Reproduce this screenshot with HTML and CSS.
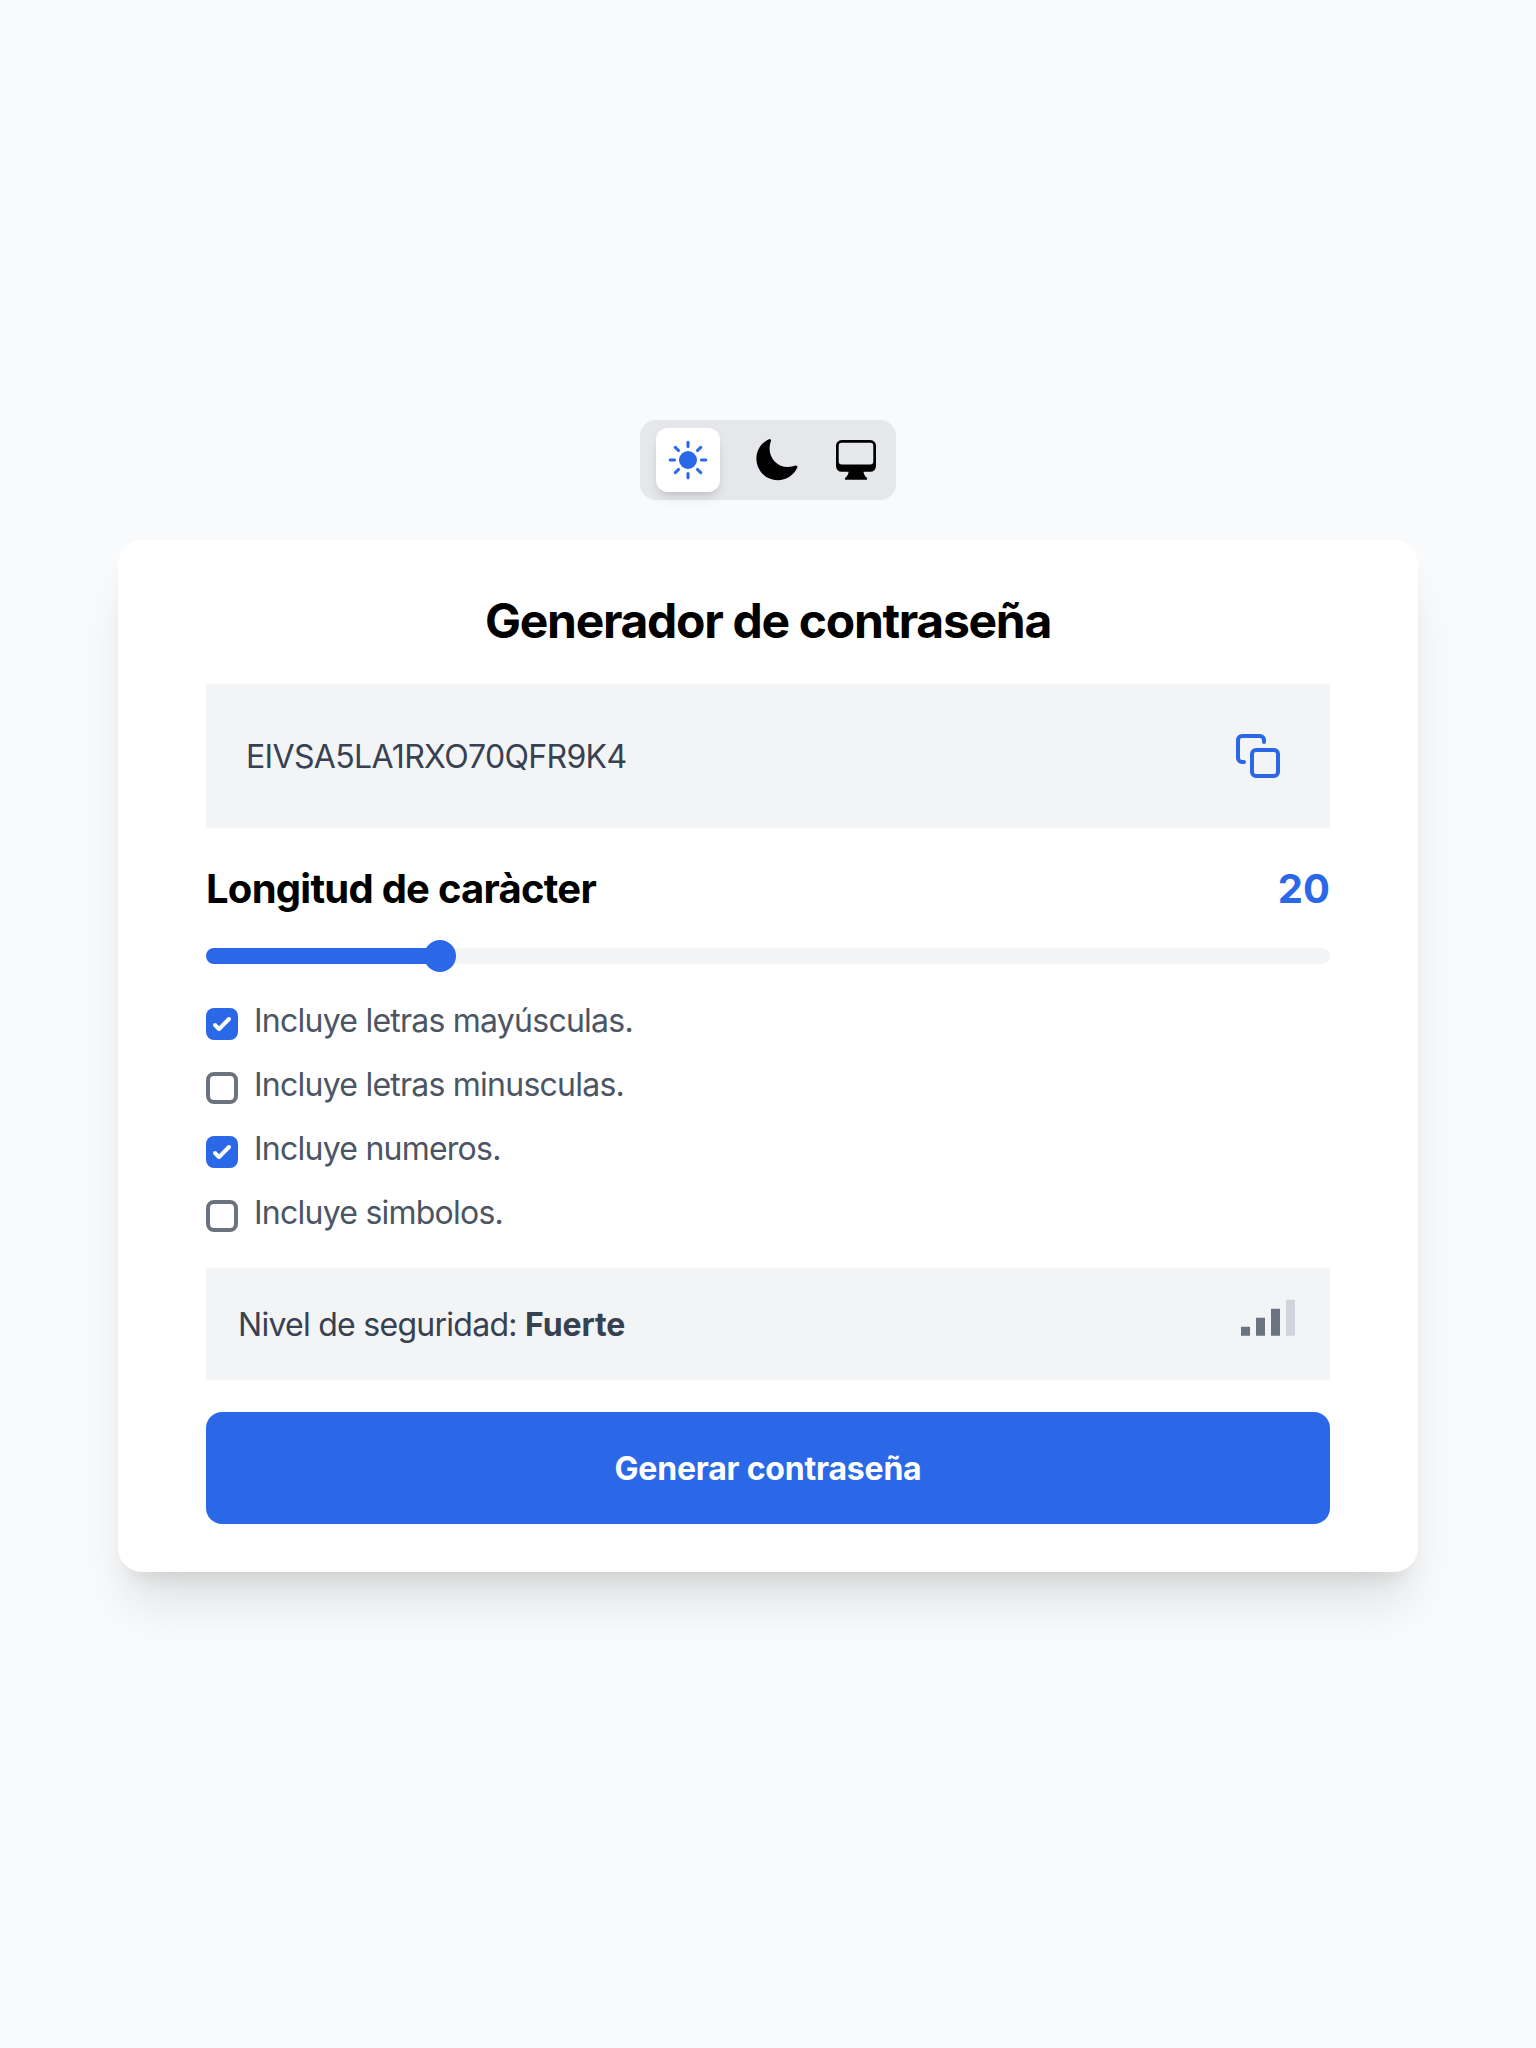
FILE: index.html
```html
<!DOCTYPE html>
<html lang="es">
<head>
<meta charset="utf-8">
<title>Generador de contraseña</title>
<link rel="stylesheet" href="styles.css">
</head>
<body>
<main class="page">
  <nav class="theme">
    <button class="theme-btn theme-active" aria-label="Claro">
      <svg class="icon" viewBox="0 0 48 48" fill="none" stroke="currentColor" stroke-width="3.100" stroke-linecap="round">
        <circle cx="24" cy="24" r="9" fill="currentColor" stroke="none"/>
        <path d="M24 6.200v4.300M24 37.500v4.300M6.200 24h4.300M37.500 24h4.300M11.300 11.300l3.200 3.200M33.500 33.500l3.200 3.200M11.300 36.700l3.200-3.200M33.500 14.500l3.200-3.200"/>
      </svg>
    </button>
    <button class="theme-btn" aria-label="Oscuro">
      <svg class="icon" viewBox="-16 -2 524 524" fill="currentColor"><path d="M264 480A232 232 0 0132 248c0-94 54-178.280 137.610-214.670a16 16 0 0121.060 21.060C181.070 76.430 176 104.660 176 136c0 110.280 89.720 200 200 200 31.340 0 59.570-5.070 81.610-14.670a16 16 0 0121.060 21.060C442.280 426 358 480 264 480z"/></svg>
    </button>
    <button class="theme-btn" aria-label="Sistema">
      <svg class="icon" viewBox="0 0 48 48" fill="currentColor"><path fill-rule="evenodd" d="M9.600 4h28.800a5.600 5.600 0 015.600 5.600v20.600a5.600 5.600 0 01-5.600 5.600h-6.900c.3 2.500 1.200 4.200 3 5.600 1.300 1 .8 2.400-.6 2.400H14.200c-1.400 0-1.900-1.400-.6-2.400 1.800-1.400 2.700-3.100 3-5.600H9.600A5.600 5.600 0 014 30.200V9.600A5.600 5.600 0 019.600 4zM9.700 6.700a3 3 0 00-3 3v15.800a3 3 0 003 3h28.600a3 3 0 003-3V9.700a3 3 0 00-3-3z"/></svg>
    </button>
  </nav>

  <section class="card">
    <h1 class="title">Generador de contraseña</h1>

    <div class="password">
      <span class="password-text">EIVSA5LA1RXO70QFR9K4</span>
      <svg class="icon copy" viewBox="0 0 24 24" fill="none" stroke="currentColor" stroke-width="2" stroke-linecap="round" stroke-linejoin="round"><rect x="9" y="9" width="13" height="13" rx="2"/><path d="M5 15H4a2 2 0 01-2-2V4a2 2 0 012-2h9a2 2 0 012 2v1"/></svg>
    </div>

    <div class="length">
      <h2 class="length-label">Longitud de caràcter</h2>
      <span class="length-value">20</span>
    </div>

    <div class="slider">
      <div class="slider-fill" style="width: 20.8%"><span class="slider-thumb"></span></div>
    </div>

    <div class="options">
      <label class="option"><span class="box box-on"><svg viewBox="0 0 16 16" fill="#fff"><path d="M12.207 4.793a1 1 0 010 1.414l-5 5a1 1 0 01-1.414 0l-2-2a1 1 0 011.414-1.414L6.500 9.086l4.293-4.293a1 1 0 011.414 0z"/></svg></span><span>Incluye letras mayúsculas.</span></label>
      <label class="option"><span class="box"></span><span>Incluye letras minusculas.</span></label>
      <label class="option"><span class="box box-on"><svg viewBox="0 0 16 16" fill="#fff"><path d="M12.207 4.793a1 1 0 010 1.414l-5 5a1 1 0 01-1.414 0l-2-2a1 1 0 011.414-1.414L6.500 9.086l4.293-4.293a1 1 0 011.414 0z"/></svg></span><span>Incluye numeros.</span></label>
      <label class="option"><span class="box"></span><span>Incluye simbolos.</span></label>
    </div>

    <div class="level">
      <p class="level-text">Nivel de seguridad: <strong class="level-value">Fuerte</strong></p>
      <svg class="bars" viewBox="0 0 60 60"><path fill="#6b7280" d="M3 32.700h9v9H3zM18 23.700h9v18h-9zM33 14.700h9v27h-9z"/><path fill="#d1d5db" d="M48 5.700h9v36h-9z"/></svg>
    </div>

    <button class="generate">Generar contraseña</button>
  </section>
</main>
</body>
</html>
```
FILE: styles.css
```css
* {
  box-sizing: border-box;
  margin: 0;
}

body {
  background: #f9fafb;
  color: #000;
  font-family: Inter, "Liberation Sans", sans-serif;
  font-size: 32px;
  line-height: 48px;
}

button {
  border: 0;
  padding: 0;
  background: none;
  color: inherit;
  font: inherit;
}

.page {
  display: flex;
  flex-direction: column;
  align-items: center;
  gap: 40px;
  min-height: 2048px;
  padding-top: 420px;
}

.theme {
  display: flex;
  align-items: center;
  gap: 32px;
  height: 80px;
  padding: 0 16px;
  border-radius: 16px;
  background: #e5e7eb;
}

.theme-btn {
  display: flex;
  align-items: center;
  justify-content: center;
}

.theme-active {
  width: 64px;
  height: 64px;
  border-radius: 12px;
  background: #fff;
  color: #2b68e8;
  box-shadow: 0 8px 12px -2px rgba(0, 0, 0, .1), 0 4px 8px -4px rgba(0, 0, 0, .1);
}

.icon {
  display: block;
  width: 48px;
  height: 48px;
}

.card {
  display: flex;
  flex-direction: column;
  gap: 32px;
  width: 1300px;
  padding: 48px 88px;
  border-radius: 24px;
  background: #fff;
  box-shadow: 0 40px 50px -10px rgba(0, 0, 0, .1), 0 16px 20px -12px rgba(0, 0, 0, .1);
}

.title {
  height: 64px;
  font-size: 48px;
  font-weight: 700;
  line-height: 66px;
  letter-spacing: -1.3px;
  text-align: center;
}

.password {
  display: flex;
  align-items: center;
  justify-content: space-between;
  height: 144px;
  padding: 0 48px 0 40px;
  background: #f3f4f6;
  color: #374151;
}

.password-text {
  padding-top: 2px;
  letter-spacing: -.66px;
}

.copy {
  color: #2b68e8;
}

.length {
  display: flex;
  justify-content: space-between;
  height: 56px;
  font-size: 40px;
  font-weight: 700;
  line-height: 58px;
}

.length-label {
  font-size: 40px;
  letter-spacing: -.75px;
}

.length-value {
  color: #2b68e8;
}

.slider {
  height: 16px;
  border-radius: 8px;
  background: #f3f4f6;
}

.slider-fill {
  position: relative;
  height: 16px;
  border-radius: 8px;
  background: #2b68e8;
}

.slider-thumb {
  position: absolute;
  top: -8px;
  right: -16px;
  width: 32px;
  height: 32px;
  border-radius: 50%;
  background: #2b68e8;
}

.options {
  display: grid;
  gap: 16px;
  color: #4b5563;
}

.option {
  display: flex;
  gap: 16px;
  height: 48px;
  line-height: 50px;
  letter-spacing: -.76px;
}

.box {
  width: 32px;
  height: 32px;
  margin-top: 12px;
  border: 4px solid #6b7280;
  border-radius: 8px;
}

.box-on {
  border: 0;
  background: #2b68e8;
}

.box svg {
  display: block;
}

.level {
  display: flex;
  align-items: center;
  justify-content: space-between;
  height: 112px;
  padding: 0 32px;
  background: #f3f4f6;
  color: #374151;
}

.level-text {
  padding-top: 2px;
  letter-spacing: -.73px;
}

.level-value {
  font-weight: 700;
  letter-spacing: -.1px;
}

.bars {
  width: 60px;
  height: 60px;
}

.generate {
  height: 112px;
  padding-top: 2px;
  border-radius: 16px;
  background: #2b68e8;
  color: #fff;
  font-weight: 700;
  letter-spacing: -.2px;
}
```
